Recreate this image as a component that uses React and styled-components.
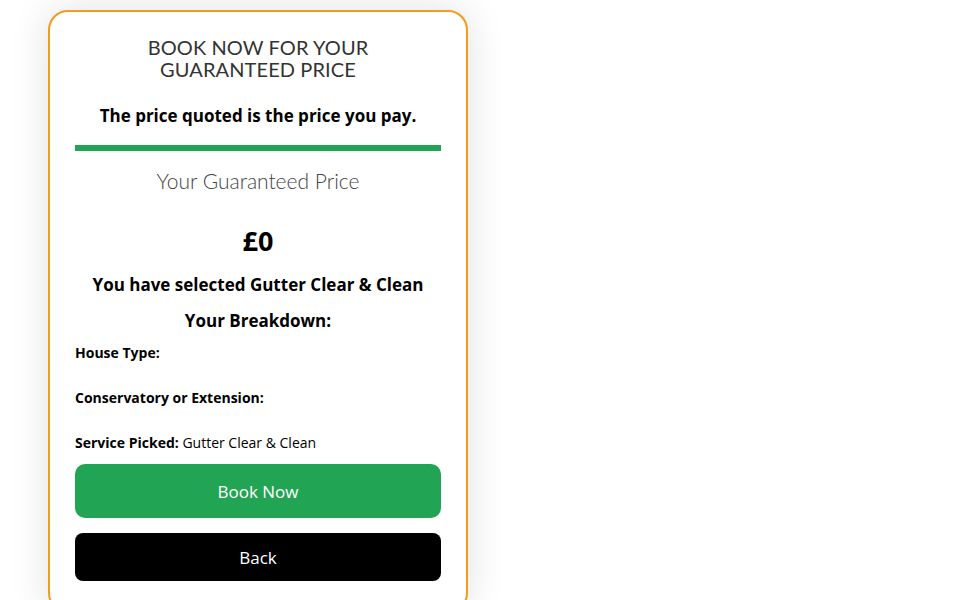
import React from 'react';
import styled, { createGlobalStyle } from 'styled-components';

const Global = createGlobalStyle`
  html, body {
    margin: 0;
    padding: 0;
    background: #fff;
  }
  body {
    font-family: "Open Sans", "Noto Sans", sans-serif;
  }
`;

const Page = styled.div`
  width: 960px;
  height: 600px;
  overflow: hidden;
  padding: 10px 0 0 48px;
  box-sizing: border-box;
`;

const Card = styled.div`
  width: 420px;
  box-sizing: border-box;
  border: 2px solid #f49b1c;
  border-radius: 20px;
  background: #fff;
  box-shadow: 0 0 40px rgba(0, 0, 0, 0.12);
  padding: 24px 25px 30px;
  display: flex;
  flex-direction: column;
  align-items: stretch;
`;

const Title = styled.h2`
  margin: 0;
  font-family: "Lato", "Noto Sans", sans-serif;
  font-weight: 400;
  font-size: 20px;
  letter-spacing: 0.1px;
  line-height: 22px;
  color: #333;
  text-align: center;
  text-transform: uppercase;
`;

const Strap = styled.p`
  margin: 24px 0 0;
  font-size: 17px;
  font-weight: 700;
  line-height: 24px;
  color: #000;
  text-align: center;
`;

const Rule = styled.div`
  height: 6px;
  background: #22a455;
  margin-top: 17px;
`;

const Subtitle = styled.h3`
  margin: 17px 0 0;
  font-family: "Lato", "Noto Sans", sans-serif;
  font-weight: 300;
  font-size: 21px;
  line-height: 26px;
  color: #444;
  text-align: center;
`;

const Price = styled.div`
  margin-top: 30px;
  font-size: 27px;
  font-weight: 700;
  line-height: 34px;
  text-align: center;
  color: #000;
`;

const Heading = styled.div`
  margin-top: ${p => p.$gap}px;
  font-size: 17px;
  font-weight: 700;
  line-height: 24px;
  text-align: center;
  color: #000;
`;

const Breakdown = styled.div`
  margin-top: 10px;
  display: flex;
  flex-direction: column;
  gap: 25px;
`;

const Row = styled.div`
  font-size: 14px;
  line-height: 20px;
  color: #000;

  b {
    font-weight: 700;
  }
`;

const Button = styled.button`
  display: block;
  width: 100%;
  border: 0;
  margin-top: ${p => p.$gap}px;
  height: ${p => p.$height}px;
  border-radius: ${p => p.$radius}px;
  background: ${p => p.$bg};
  color: #fff;
  font-family: "Open Sans", "Noto Sans", sans-serif;
  font-size: 17px;
  cursor: pointer;
`;

export default function App() {
  return (
    <>
      <Global />
      <Page>
        <Card>
          <Title>
            Book now for your
            <br />
            guaranteed price
          </Title>
          <Strap>The price quoted is the price you pay.</Strap>
          <Rule />
          <Subtitle>Your Guaranteed Price</Subtitle>
          <Price>£0</Price>
          <Heading $gap={15}>You have selected Gutter Clear &amp; Clean</Heading>
          <Heading $gap={12}>Your Breakdown:</Heading>
          <Breakdown>
            <Row><b>House Type:</b></Row>
            <Row><b>Conservatory or Extension:</b></Row>
            <Row><b>Service Picked:</b> Gutter Clear &amp; Clean</Row>
          </Breakdown>
          <Button $gap={11} $height={54} $radius={10} $bg="#22a455">Book Now</Button>
          <Button $gap={15} $height={48} $radius={8} $bg="#000">Back</Button>
        </Card>
      </Page>
    </>
  );
}
